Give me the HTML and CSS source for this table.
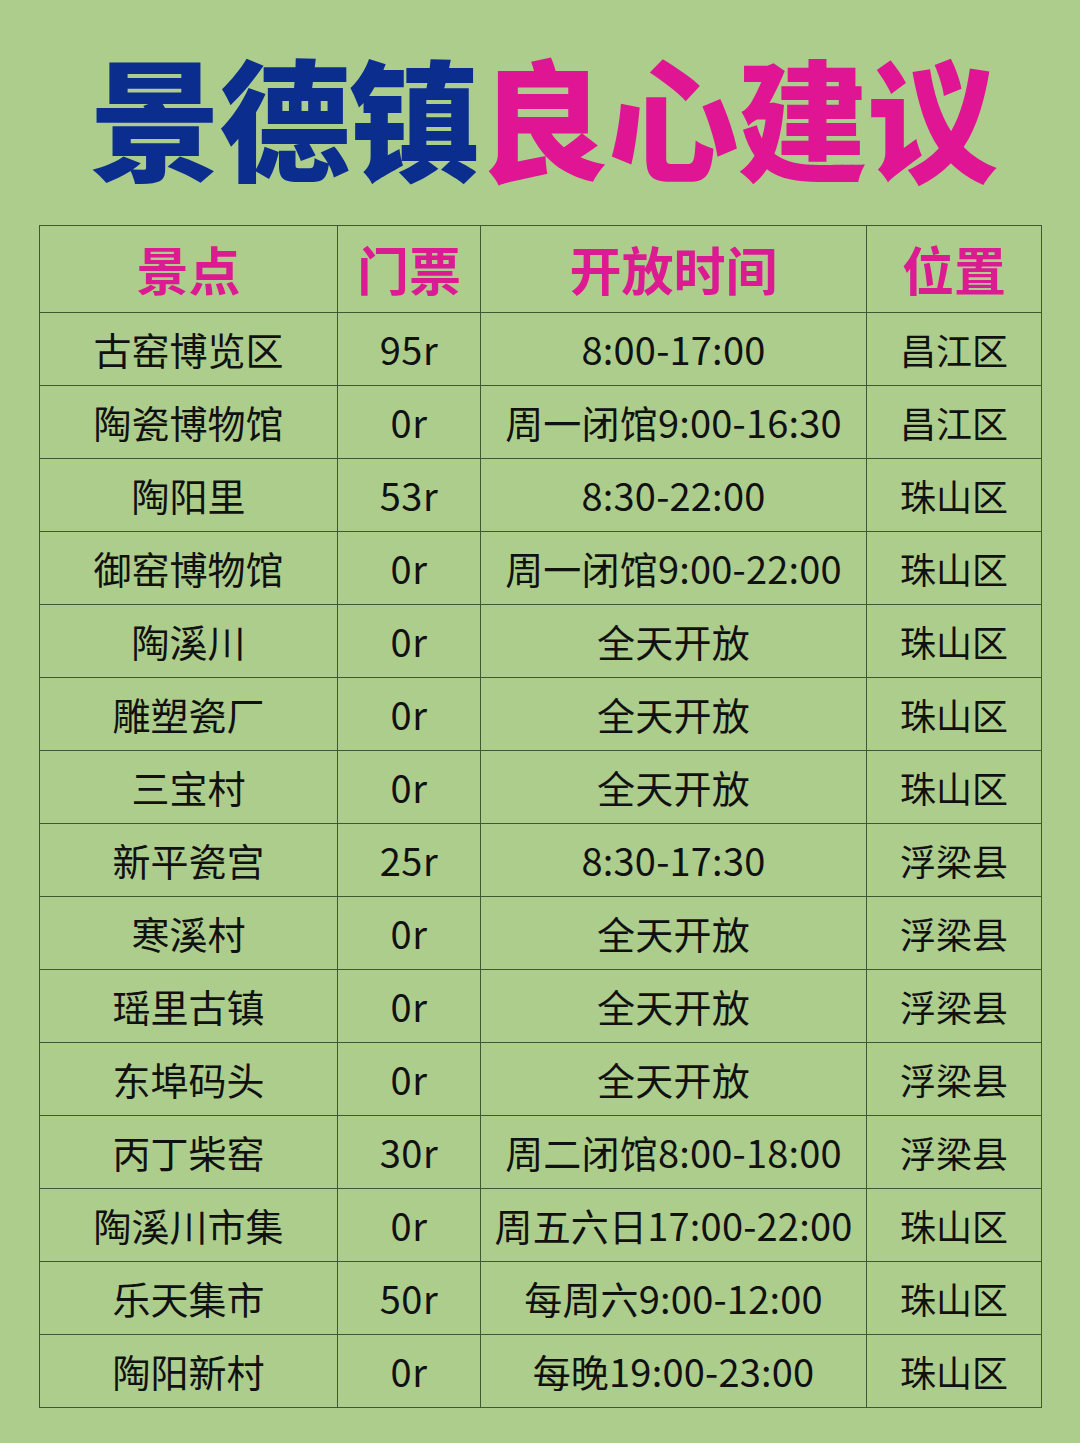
FILE: index.html
```html
<!DOCTYPE html>
<html lang="zh">
<head>
<meta charset="utf-8">
<link rel="stylesheet" href="styles.css">
</head>
<body>
<div class="page">
  <h1 class="title"><span class="blue">景德镇</span><span class="pink">良心建议</span></h1>
  <table class="grid">
    <colgroup>
      <col class="c1"><col class="c2"><col class="c3"><col class="c4">
    </colgroup>
    <thead>
      <tr><th>景点</th><th>门票</th><th>开放时间</th><th>位置</th></tr>
    </thead>
    <tbody>
      <tr><td>古窑博览区</td><td>95r</td><td>8:00-17:00</td><td>昌江区</td></tr>
      <tr><td>陶瓷博物馆</td><td>0r</td><td>周一闭馆9:00-16:30</td><td>昌江区</td></tr>
      <tr><td>陶阳里</td><td>53r</td><td>8:30-22:00</td><td>珠山区</td></tr>
      <tr><td>御窑博物馆</td><td>0r</td><td>周一闭馆9:00-22:00</td><td>珠山区</td></tr>
      <tr><td>陶溪川</td><td>0r</td><td>全天开放</td><td>珠山区</td></tr>
      <tr><td>雕塑瓷厂</td><td>0r</td><td>全天开放</td><td>珠山区</td></tr>
      <tr><td>三宝村</td><td>0r</td><td>全天开放</td><td>珠山区</td></tr>
      <tr><td>新平瓷宫</td><td>25r</td><td>8:30-17:30</td><td>浮梁县</td></tr>
      <tr><td>寒溪村</td><td>0r</td><td>全天开放</td><td>浮梁县</td></tr>
      <tr><td>瑶里古镇</td><td>0r</td><td>全天开放</td><td>浮梁县</td></tr>
      <tr><td>东埠码头</td><td>0r</td><td>全天开放</td><td>浮梁县</td></tr>
      <tr><td>丙丁柴窑</td><td>30r</td><td>周二闭馆8:00-18:00</td><td>浮梁县</td></tr>
      <tr><td>陶溪川市集</td><td>0r</td><td>周五六日17:00-22:00</td><td>珠山区</td></tr>
      <tr><td>乐天集市</td><td>50r</td><td>每周六9:00-12:00</td><td>珠山区</td></tr>
      <tr><td>陶阳新村</td><td>0r</td><td>每晚19:00-23:00</td><td>珠山区</td></tr>
    </tbody>
  </table>
</div>
</body>
</html>
```

FILE: styles.css
```css
html, body {
  margin: 0;
  padding: 0;
  background: #adcd8c;
}
body {
  font-family: "Noto Sans CJK SC", "Noto Sans", sans-serif;
  width: 1080px;
  height: 1443px;
  overflow: hidden;
}
.page {
  padding: 34px 39px 0 39px;
}
.title {
  margin: 0 0 31px 0;
  text-align: center;
  font-size: 131px;
  font-weight: 900;
  line-height: 160px;
  letter-spacing: -1.5px;
  white-space: nowrap;
  padding-left: 6px;
}
.blue { color: #0b2e8e; }
.pink { color: #df1593; }
.grid {
  border-collapse: collapse;
  width: 1002px;
  table-layout: fixed;
}
.c1 { width: 298px; }
.c2 { width: 143px; }
.c3 { width: 386px; }
.c4 { width: 175px; }
.grid th, .grid td {
  border: 1.5px solid #3d5a35;
  text-align: center;
  padding: 0;
  white-space: nowrap;
}
.grid th {
  height: 86px;
  color: #dc1a92;
  font-size: 52px;
  font-weight: 700;
  line-height: 1;
}
.grid td {
  height: 72px;
  color: #111;
  font-size: 38px;
  font-weight: 400;
  line-height: 1;
}
.grid td:nth-child(2) {
  letter-spacing: 0.5px;
}
.grid td:nth-child(3) {
  letter-spacing: 0.2px;
}
.grid td:nth-child(4) {
  font-size: 36px;
}
```
